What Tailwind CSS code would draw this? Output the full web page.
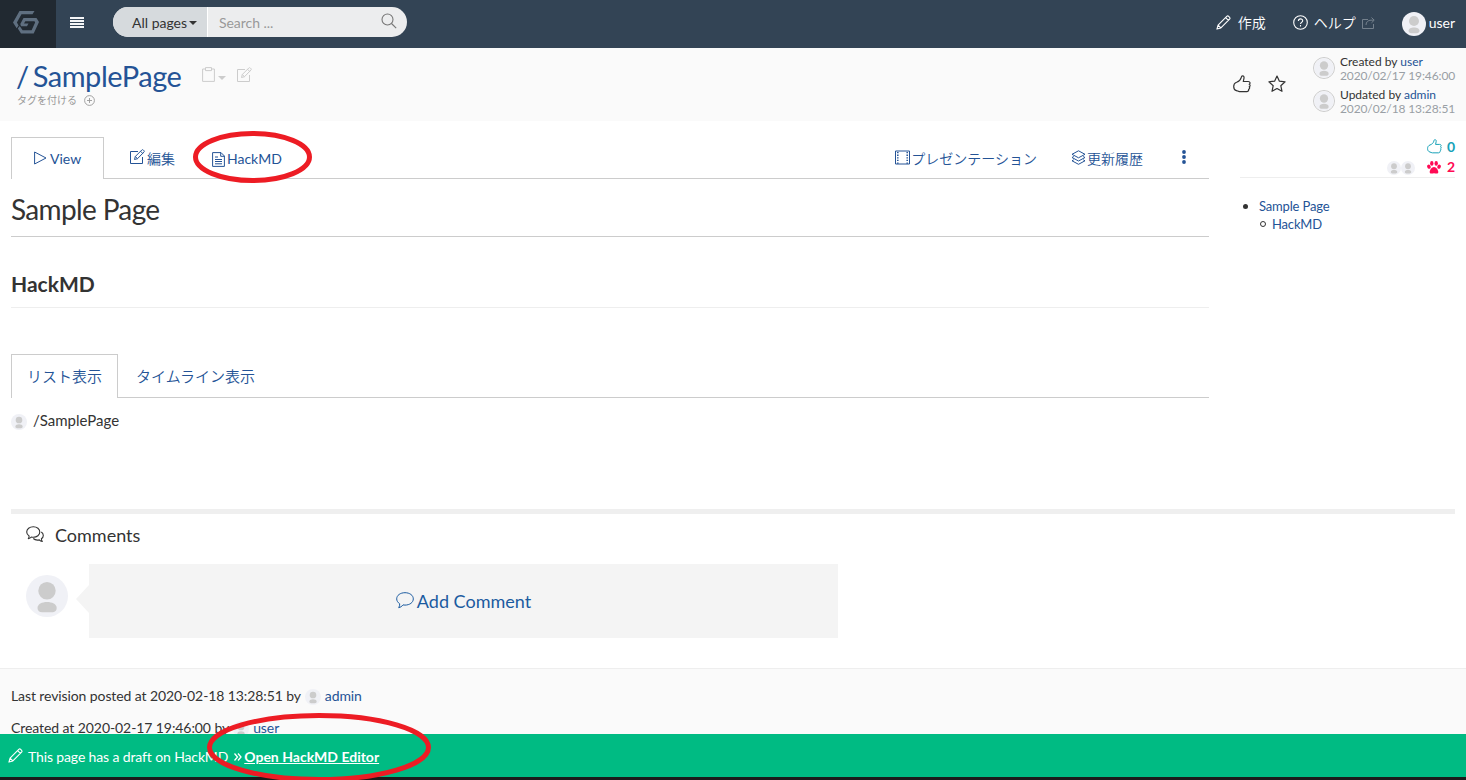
<!DOCTYPE html>
<html lang="ja">
<head>
<meta charset="utf-8">
<title>/SamplePage</title>
<script src="https://cdn.jsdelivr.net/npm/@tailwindcss/browser@4"></script>
</head>
<body class="h-[780px] overflow-hidden bg-white font-[Lato,'Noto_Sans_CJK_JP',sans-serif] text-sm text-[#333]">
<svg class="hidden">
  <symbol id="avatar" viewBox="0 0 42 42"><circle cx="21" cy="21" r="21" fill="#f0f1f6"/><ellipse cx="21" cy="15.7" rx="8.7" ry="8.8" fill="#ccc"/><path d="M11.5 33C11.500 29 16 27 21 27s9.700 2 9.700 6c0 3-2.500 4.300-4.500 4.300H16c-2.500 0-4.500-1.500-4.500-4.300z" fill="#ccc"/></symbol>
  <symbol id="pencil" viewBox="0 0 16 16"><path d="M1 15l1.200-4.200L11.500 1.500c.6-.6 1.400-.6 2 0l1 1c.6.6.6 1.400 0 2L5.200 13.800zM2.200 10.800l3 3M10.300 2.700l3 3" fill="none" stroke="currentColor" stroke-width="1.200" stroke-linejoin="round"/></symbol>
  <symbol id="note" viewBox="0 0 16 16"><path d="M9 2.500H1.500v12h12V8M5.500 10.500l.8-3L12.800 1c.5-.5 1-.5 1.500 0l.6.6c.5.500.5 1 0 1.500L8.500 9.700zM6.300 7.500l2.200 2.200M11.600 2.300l2.100 2.100" fill="none" stroke="currentColor" stroke-linejoin="round"/></symbol>
  <symbol id="thumb" viewBox="0 0 18 18"><path d="M3.600 7.200C6 6.300 7.700 4.800 8.200 2.600 8.400 1.400 8.800.8 9.600.8c1.200 0 1.600 1 1.400 2.300l-.7 3.400h4.900c2.200 0 2.300 2.300 1 2.700 1.300.5 1.100 2.200 0 2.600.8.600.5 2.200-.6 2.500.4 1.300-.4 2.300-1.800 2.300H6.500c-1.200 0-2-.8-3-1C1.600 15.200.7 13.600.7 11.500s1-3.700 2.900-4.300z" fill="none" stroke="currentColor" stroke-width="1.200" stroke-linejoin="round"/></symbol>
</svg>

<div class="relative h-[780px] overflow-hidden">
  <!-- Navigation bar -->
  <header class="flex h-12 items-center bg-[#334455] text-white">
    <div class="flex h-12 w-14 items-start bg-[#212931] pt-[11px] pl-[13px]">
      <svg class="h-[23px] w-[26px]" viewBox="13 11 26 23" fill="#5f6f80"><path d="M19.500 11h15l-2 3.300h-11l-4.600 8.200 1.700 3-1.900 2.800L13 22.500z"/><path d="M23.500 18h13l2.500 4-5.300 11.600H21l-3.200-5.100 1.900-2.500 2.900 4.200h9l3.500-7.800-.6-1.200H25.300l-1.300 2.300h4.500L27 26.200h-6l-.7-2.200z"/></svg>
    </div>
    <svg class="mt-[-4px] ml-[14px] h-[11px] w-[14px]" viewBox="0 0 14 11" fill="#fff"><path d="M0 0h14v2H0zM0 3h14v2H0zM0 6h14v2H0zM0 9h14v2H0z" fill-opacity=".95"/></svg>
    <div class="ml-[29px] mt-[-4px] flex h-[30px] w-[294px] overflow-hidden rounded-full bg-[#ecedee] text-[#333]">
      <div class="flex w-[95px] items-center border-r border-white bg-[#d6dadd] pt-[2px] pl-[19px] text-sm">All pages<svg class="ml-[2px] h-1 w-2" viewBox="0 0 8 4"><path d="M0 0h8L4 4z" fill="#333"/></svg></div>
      <div class="flex flex-1 items-center justify-between pt-[2px] pr-[10px] pl-[11px] tracking-[-.05px] text-[#999]">Search ...<svg class="mt-[-4px] h-4 w-4" viewBox="0 0 16 16" fill="none" stroke="#777" stroke-width="1.100"><circle cx="6.500" cy="6.500" r="5.500"/><path d="M10.500 10.500l4.700 4.700"/></svg></div>
    </div>
    <div class="mt-[-2px] ml-auto flex items-center pr-[10px]">
      <svg class="mt-[-2px] h-[15px] w-[15px]"><use href="#pencil"/></svg>
      <span class="ml-[7px] font-[350]">作成</span>
      <svg class="mt-[-2px] ml-[27px] h-[15px] w-[15px]" viewBox="0 0 15 15" fill="none" stroke="#fff" stroke-width="1.100"><circle cx="7.500" cy="7.500" r="6.800"/><path d="M5.400 6c0-2.800 4.300-2.700 4.300-.2 0 1.500-2.200 1.600-2.200 3.200M7.500 10v1.400"/></svg>
      <span class="ml-[6px] font-[350]">ヘルプ</span>
      <svg class="ml-[6px] h-3 w-[13px]" viewBox="0 0 13 12" fill="none" stroke="#74808c"><path d="M6 2.500H.5v9h11V7M4 8c0-3 2-4.800 5-4.800h3M9.500.5l2.700 2.700-2.700 2.600"/></svg>
      <svg class="mt-[2px] ml-[27px] h-6 w-6"><use href="#avatar"/></svg>
      <span class="mr-px ml-[3px]">user</span>
    </div>
  </header>

  <!-- Page title -->
  <section class="flex h-[73px] justify-between bg-[#fafafa] pr-[11px] pl-4">
    <div>
      <div class="mt-[10px] flex h-9 items-center">
        <h1 class="text-[29px] leading-9 tracking-[-.45px] whitespace-nowrap text-[#245396]">/<span class="ml-[4px]">SamplePage</span></h1>
        <svg class="ml-[21px] mt-[-3px] h-[15px] w-[13px]" viewBox="0 0 13 15" fill="none" stroke="#ccc"><path d="M3.500 2H.6v12.400h11.800V2H9.500M3.500.6h6v3h-6z"/></svg>
        <svg class="ml-[3px] mt-[3px] h-1 w-2" viewBox="0 0 8 4"><path d="M0 0h8L4 4z" fill="#ccc"/></svg>
        <svg class="ml-[10px] mt-[-3px] h-4 w-4 text-[#ccc]"><use href="#note"/></svg>
      </div>
      <div class="flex h-3 items-center text-[10px] leading-3 text-[#999]"><span class="ml-px">タグを付ける</span><svg class="ml-[7px] h-[11px] w-[11px]" viewBox="0 0 11 11" fill="none" stroke="#999" stroke-width=".9"><circle cx="5.500" cy="5.500" r="4.900"/><path d="M5.500 3v5M3 5.500h5"/></svg></div>
    </div>
    <div class="flex">
      <svg class="mt-[27px] h-[18px] w-[18px]"><use href="#thumb"/></svg>
      <svg class="mt-[27px] ml-[17px] h-[18px] w-[18px]" viewBox="0 0 18 18"><path d="M9 1l2.400 5.200 5.700.6-4.300 3.900 1.200 5.600L9 13.500l-5 2.800 1.200-5.600L.9 6.800l5.700-.6z" fill="none" stroke="#333" stroke-width="1.200" stroke-linejoin="round"/></svg>
      <div class="ml-[27px] pt-[7px]">
        <div class="flex h-[33px]"><svg class="mt-[2px] h-[22px] w-[22px] rounded-full border border-[#ccc]"><use href="#avatar"/></svg><div class="ml-[5px] text-xs leading-[14px]"><div>Created by <span class="text-[#245396]">user</span></div><div class="w-[115px] text-[12px] tracking-[-.12px] whitespace-nowrap text-[#999fa5]">2020/02/17 19:46:00</div></div></div>
        <div class="flex h-[33px]"><svg class="mt-[2px] h-[22px] w-[22px] rounded-full border border-[#ccc]"><use href="#avatar"/></svg><div class="ml-[5px] text-xs leading-[14px]"><div>Updated by <span class="text-[#245396]">admin</span></div><div class="w-[115px] text-[12px] tracking-[-.12px] whitespace-nowrap text-[#999fa5]">2020/02/18 13:28:51</div></div></div>
      </div>
    </div>
  </section>

  <main class="flex h-[388px] justify-between pr-[11px] pl-[11px]">
    <article class="w-[1198px] pt-4">
      <nav class="flex h-[42px] border-b border-[#ccc] text-[#245396]">
        <div class="-mb-px flex h-[42px] w-[93px] items-center border border-b-0 border-[#ccc] bg-white pt-px pl-[22px]"><svg class="mt-[-2px] h-[14px] w-[13px]" viewBox="0 0 13 14"><path d="M.6 1v12L12 7z" fill="none" stroke="currentColor" stroke-linejoin="round"/></svg><span class="ml-[3px]">View</span></div>
        <div class="ml-[25px] flex items-center pt-[2px]"><svg class="mt-[-3px] h-4 w-4"><use href="#note"/></svg><span class="ml-[2px] font-[350]">編集</span></div>
        <div class="ml-[37px] flex items-center pt-[3px]"><svg class="h-[15px] w-[13px]" viewBox="0 0 13 15" fill="none" stroke="currentColor"><path d="M.6.600h8.400l3.400 3.400v10.400H.6zM8.700.600v3.700h3.700M3 5h3M3 7.500h7M3 9.500h7M3 11.800h7"/></svg><span class="ml-[2px]">HackMD</span></div>
        <div class="mr-[23px] ml-auto flex items-center pt-[2px]">
          <svg class="mt-[-2px] h-[15px] w-[15px]" viewBox="0 0 15 15" fill="none" stroke="currentColor"><path d="M.5 1h14v13H.5z"/><path d="M2.800 2v12M12.200 2v12" stroke-width="1.500" stroke-dasharray="1.300 1.300"/></svg><span class="ml-px font-[350]">プレゼンテーション</span>
          <svg class="mt-[-3px] ml-[34px] h-[15px] w-[15px]" viewBox="0 0 15 15" fill="none" stroke="currentColor" stroke-linejoin="round"><path d="M7.500.800L14 4.300 7.500 7.800 1 4.300zM2.800 6.500L1 7.500 7.500 11 14 7.500l-1.800-1M2.800 9.800L1 10.800l6.500 3.500 6.500-3.500-1.800-1"/></svg><span class="ml-px font-[350]">更新履歴</span>
          <svg class="mt-[-3px] ml-[39px] h-[14px] w-1" viewBox="0 0 4 14" fill="currentColor"><circle cx="2" cy="2" r="1.900"/><circle cx="2" cy="7" r="1.900"/><circle cx="2" cy="12" r="1.900"/></svg>
        </div>
      </nav>
      <h1 class="h-[58px] border-b border-[#ccc] pt-[11px] text-[28px] leading-[38px] tracking-[-.65px]">Sample Page</h1>
      <h2 class="mt-[30px] h-[41px] border-b border-[#eee] text-[21px] leading-[33px] font-bold">HackMD</h2>
      <nav class="mt-[46px] flex h-11 border-b border-[#ccc] text-[15px] font-[350] text-[#245396]">
        <div class="flex h-11 w-[107px] items-center justify-center border border-b-0 border-[#ccc] bg-white">リスト表示</div>
        <div class="flex items-center pt-[2px] pl-[18px]">タイムライン表示</div>
      </nav>
      <div class="mt-[13px] flex h-5 items-center text-[15px]"><svg class="mt-[2px] h-4 w-4"><use href="#avatar"/></svg><span class="ml-[6px]">/SamplePage</span></div>
    </article>
    <aside class="w-[215px]">
      <div class="h-[57px] border-b border-[#eee] pt-[16px] font-bold">
        <div class="flex h-5 items-center justify-end text-[#17a2b8]"><svg class="mt-[-1px] h-[15px] w-[15px]"><use href="#thumb"/></svg><span class="ml-[5px]">0</span></div>
        <div class="flex h-5 items-center justify-end text-[#ff0a54]"><svg class="mt-[2px] h-[14px] w-[14px]"><use href="#avatar"/></svg><svg class="mt-[2px] h-[14px] w-[14px]"><use href="#avatar"/></svg><svg class="ml-[12px] h-[13px] w-[14px]" viewBox="0 0 14 13" fill="currentColor"><ellipse cx="1.900" cy="5.700" rx="1.700" ry="2.100" transform="rotate(-20 1.900 5.700)"/><ellipse cx="4.800" cy="2.400" rx="1.700" ry="2.300"/><ellipse cx="9.200" cy="2.400" rx="1.700" ry="2.300"/><ellipse cx="12.100" cy="5.700" rx="1.700" ry="2.100" transform="rotate(20 12.100 5.700)"/><path d="M7 6c2.200 0 4.300 3 4.300 5 0 2.400-2.500 1.300-4.300 1.300S2.700 13.400 2.700 11c0-2 2.100-5 4.300-5z"/></svg><span class="ml-[6px]">2</span></div>
      </div>
      <div class="mt-[19px] text-[13px] leading-[18px] tracking-[-.17px] text-[#245396]">
        <div class="flex items-center"><i class="ml-[3px] h-[5px] w-[5px] rounded-full bg-[#333]"></i><span class="ml-[11px]">Sample Page</span></div>
        <div class="flex items-center"><i class="ml-[20px] h-[6px] w-[6px] rounded-full border border-[#333]"></i><span class="ml-[6px]">HackMD</span></div>
      </div>
    </aside>
  </main>

  <!-- Comments -->
  <section class="mx-[11px] h-[159px] border-t-5 border-[#efefef] pl-[15px]">
    <h4 class="flex h-[43px] items-center text-lg"><svg class="mt-[-2px] h-[17px] w-[18px]" viewBox="0 0 18 17" fill="none" stroke="#333" stroke-width="1.100" stroke-linejoin="round"><path d="M7.300.700c3.700 0 6.500 2.300 6.500 5.300s-2.800 5.300-6.500 5.300c-.7 0-1.300-.1-2-.3-.8 1-1.700 1.500-3 1.700.6-.8.900-1.700.8-2.700C1.600 9 .7 7.600.7 6 .7 3 3.600.700 7.300.700z"/><path d="M15.300 6c1.300.9 2 2.100 2 3.500 0 1.300-.7 2.500-1.900 3.300 0 1.100.3 1.900.9 2.700-1.200-.2-2.200-.7-3-1.600-2.300.500-4.700-.1-6-1.400"/></svg><span class="mt-[-1px] ml-[11px]">Comments</span></h4>
    <div class="mt-[7px] flex h-[74px]">
      <svg class="mt-[11px] h-[42px] w-[42px]"><use href="#avatar"/></svg>
      <svg class="mt-[21px] ml-[8px] h-7 w-[13px]" viewBox="0 0 13 28"><path d="M13 0v28L0 14z" fill="#f4f4f4"/></svg>
      <div class="flex w-[749px] items-center justify-center bg-[#f4f4f4] text-lg text-[#1b5ba0]"><svg class="mt-[-2px] mr-[3px] h-[17px] w-[18px]" viewBox="0 0 18 17"><path d="M9 .700c4.700 0 8.300 2.600 8.300 6.200s-3.600 6.200-8.300 6.200c-.7 0-1.400-.1-2-.2-1.200 1.500-2.500 2.400-4.300 2.800.8-1.300 1.100-2.500 1-3.900C1.900 10.600.7 8.900.7 6.900.7 3.300 4.300.700 9 .700z" fill="none" stroke="currentColor" stroke-linejoin="round"/></svg>Add Comment</div>
    </div>
  </section>

  <footer class="h-[112px] border-t border-[#eee] bg-[#fafafa] pt-[11px] pl-[11px]">
    <div class="flex h-8 items-center tracking-[-.1px]">Last revision posted at 2020-02-18 13:28:51 by<svg class="mt-[2px] ml-[4px] h-4 w-4"><use href="#avatar"/></svg><span class="ml-[4px] text-[#245396]">admin</span></div>
    <div class="flex h-8 items-center tracking-[-.08px]">Created at 2020-02-17 19:46:00 by<svg class="mt-[2px] ml-[4px] h-4 w-4"><use href="#avatar"/></svg><span class="ml-[4px] text-[#245396]">user</span></div>
  </footer>

  <!-- Draft notice fixed to the bottom edge -->
  <div class="absolute inset-x-0 bottom-0 flex h-[46px] items-center border-b-3 border-[#1b1b1b] bg-[#00bb83] pt-[2px] pl-2 text-white">
    <svg class="mt-[-2px] h-[15px] w-[15px]"><use href="#pencil"/></svg><span class="ml-[5px] tracking-[-.13px]">This page has a draft on HackMD</span>
    <svg class="ml-[6px] h-[8px] w-[8px]" viewBox="0 0 8 8" fill="none" stroke="#fff" stroke-width="1.300"><path d="M.5.500L3.500 4l-3 3.500M4 .500L7 4 4 7.500"/></svg><b class="ml-[2px] underline">Open HackMD Editor</b>
  </div>

  <!-- Hand-drawn highlights -->
  <svg class="absolute inset-0 h-[780px] w-[1466px]" fill="none" stroke="#ed1c24" stroke-width="5"><ellipse cx="252.500" cy="157" rx="57" ry="23.500"/><ellipse cx="319" cy="747.500" rx="109.500" ry="32"/></svg>
</div>
</body>
</html>
